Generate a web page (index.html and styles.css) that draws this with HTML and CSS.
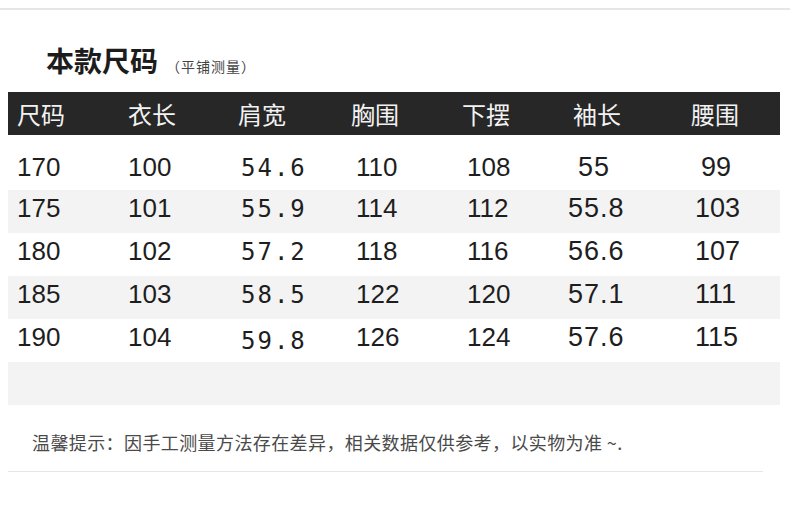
FILE: index.html
```html
<!DOCTYPE html>
<html lang="zh">
<head>
<meta charset="utf-8">
<title>本款尺码</title>
<link rel="stylesheet" href="styles.css">
</head>
<body>
<div class="topline"></div>
<div class="title-row">
  <h1 class="title">本款尺码</h1>
  <span class="subtitle">（平铺测量）</span>
</div>
<div class="table">
  <div class="head">
    <div>尺码</div><div>衣长</div><div>肩宽</div><div>胸围</div><div>下摆</div><div>袖长</div><div>腰围</div>
  </div>
  <div class="row first">
    <div>170</div><div>100</div><div class="mono">54.6</div><div>110</div><div>108</div><div class="sleeve indent">55</div><div class="last indent2">99</div>
  </div>
  <div class="row alt">
    <div>175</div><div>101</div><div class="mono">55.9</div><div>114</div><div>112</div><div class="sleeve">55.8</div><div class="last">103</div>
  </div>
  <div class="row">
    <div>180</div><div>102</div><div class="mono">57.2</div><div>118</div><div>116</div><div class="sleeve">56.6</div><div class="last">107</div>
  </div>
  <div class="row alt">
    <div>185</div><div>103</div><div class="mono">58.5</div><div>122</div><div>120</div><div class="sleeve">57.1</div><div class="last">111</div>
  </div>
  <div class="row">
    <div>190</div><div>104</div><div class="mono low">59.8</div><div>126</div><div>124</div><div class="sleeve">57.6</div><div class="last">115</div>
  </div>
  <div class="row alt blank"></div>
</div>
<div class="note">温馨提示：因手工测量方法存在差异，相关数据仅供参考，以实物为准 ~.</div>
</body>
</html>
```
FILE: styles.css
```css
* { box-sizing: border-box; }
body {
  margin: 0;
  background: #ffffff;
  font-family: "Noto Sans CJK SC", "Noto Sans", sans-serif;
  color: #222;
}
.topline {
  margin-top: 8px;
  height: 2px;
  background: #e6e6e6;
}
.title-row {
  display: flex;
  align-items: baseline;
  margin-top: 36px;
  padding-left: 46px;
  height: 28px;
}
.title {
  margin: 0;
  font-size: 28px;
  line-height: 28px;
  font-weight: 700;
  color: #1c1c1c;
}
.subtitle {
  margin-left: 8px;
  font-size: 14px;
  letter-spacing: 1px;
  color: #444;
}
.table {
  margin: 18px 10px 0 8px;
}
.head {
  display: grid;
  grid-template-columns: 111px 110px 113px 111px 111px 118px 1fr;
  height: 43px;
  background: #272727;
  color: #f2f2f2;
  font-size: 24px;
  line-height: 43px;
}
.head > div { padding-left: 9px; }
.row {
  display: grid;
  grid-template-columns: 111px 113px 115px 111px 101px 127px 1fr;
  align-items: center;
  height: 43px;
  padding-bottom: 6px;
  font-family: "Liberation Sans", Arial, sans-serif;
  font-size: 26px;
  color: #1e1e1e;
}
.row > div { padding-left: 9px; }
.row.first { height: 55px; padding-top: 16px; }
.row.alt { background: #f3f3f3; }
.row.blank { height: 43px; }
.mono {
  font-family: "DejaVu Sans Mono", monospace;
  letter-spacing: 2px;
  font-size: 24px;
}
.low { padding-top: 6px; }
.sleeve {
  font-size: 27px;
  letter-spacing: 1px;
}
.last { font-size: 27px; }
.indent { padding-left: 19px !important; }
.indent2 { padding-left: 15px !important; }
.note {
  margin-left: 8px;
  width: 755px;
  padding: 25px 0 17px 24px;
  border-bottom: 1px solid #e6e6e6;
  font-size: 18px;
  letter-spacing: 0.4px;
  line-height: 24px;
  color: #4a4a4a;
}
```
